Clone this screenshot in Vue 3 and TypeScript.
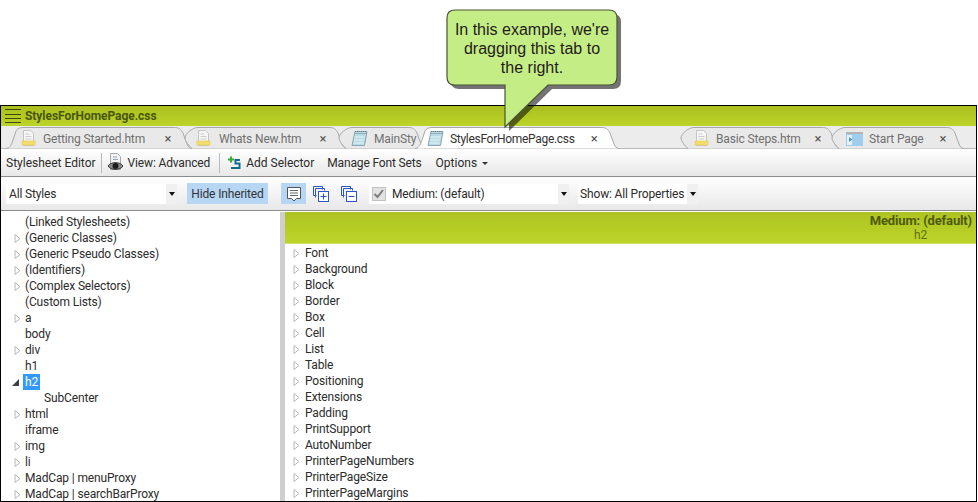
<template>
  <div class="page">
    <div class="callout">
      <svg class="callout-shape" width="190" height="130" viewBox="0 0 190 130">
        <path class="callout-shadow" :d="calloutPath" transform="translate(4 4)" />
        <path class="callout-body" :d="calloutPath" />
      </svg>
      <p class="callout-text">In this example, we're dragging this tab to the right.</p>
    </div>

    <div class="window">
      <div class="title-bar">
        <svg class="grip" width="16" height="16" viewBox="0 0 16 16">
          <path d="M0 1.500h16M0 6.500h16M0 10.500h16M0 14.500h16" stroke="#3f4a0a" fill="none" />
        </svg>
        <span class="title-text">StylesForHomePage.css</span>
      </div>

      <div class="tab-strip">
        <div
          v-for="tab in tabs"
          :key="tab.label"
          class="tab"
          :class="{ active: tab.active }"
          :style="{ width: tab.width + 'px', marginLeft: tab.offset + 'px' }"
        >
          <svg class="tab-shape" :width="tab.width" height="23" :viewBox="`0 0 ${tab.width} 23`">
            <path :d="tabPath(tab.width, tab.first)" />
          </svg>
          <svg
            v-if="tab.icon === 'doc'"
            class="tab-icon"
            :style="{ left: tab.iconX + 'px' }"
            width="15"
            height="17"
            viewBox="0 0 15 17"
          >
            <path d="M2.500.5h7l3 3v12h-10z" fill="#f6f6f4" stroke="#c4c4c4" />
            <path d="M4.500 4h4M4.500 6.500h6M4.500 9h6" stroke="#cdcdcd" />
            <rect x="1" y="11" width="13" height="4" fill="#f4dd6e" stroke="#e3c94e" stroke-width=".6" />
          </svg>
          <svg
            v-else-if="tab.icon === 'note'"
            class="tab-icon"
            :style="{ left: tab.iconX + 'px' }"
            width="17"
            height="17"
            viewBox="0 0 17 17"
          >
            <path d="M4 1.500h12l-2.500 14H1z" fill="#b9dbe6" stroke="#8aa6b4" />
            <path d="M4 1.500h12M4.500 3.500h11" stroke="#6e7f8c" stroke-dasharray="1 1" />
            <path d="M3.500 7h10M3 10h10M2.600 13h10" stroke="#e8f4f8" />
          </svg>
          <svg
            v-else
            class="tab-icon start"
            :style="{ left: tab.iconX + 'px' }"
            width="17"
            height="14"
            viewBox="0 0 17 14"
          >
            <rect x="0" y="0" width="17" height="14" fill="#9fcdee" />
            <rect x="0" y="0" width="17" height="2" fill="#b4b4b4" />
            <rect x="1" y="3" width="5" height="10" fill="#e8f2f8" />
            <path d="M3 5l3.500 2.500L3 10z" fill="#4f94c8" />
          </svg>
          <span class="tab-label" :style="{ left: tab.labelX + 'px' }">{{ tab.label }}</span>
          <span v-if="tab.closeX" class="tab-close" :style="{ left: tab.closeX + 'px' }">×</span>
        </div>
      </div>

      <div class="toolbar">
        <span class="tool-text wide">Stylesheet Editor</span>
        <i class="tool-sep"></i>
        <svg class="eye" width="17" height="19" viewBox="0 0 17 19">
          <path d="M3.500.5h7l3 3v13h-10z" fill="#f2f2f2" stroke="#a9a9a9" />
          <path d="M6 4h4M6 6.500h5" stroke="#8aa6c0" />
          <path d="M1 13c3-4.500 12-4.500 15 0-3 4.500-12 4.500-15 0z" fill="#8c8c8c" stroke="#333" />
          <circle cx="8.500" cy="13" r="3" fill="#1c1c1c" />
        </svg>
        <span class="tool-text">View: Advanced</span>
        <i class="tool-sep second"></i>
        <svg class="add" width="14" height="14" viewBox="0 0 14 14">
          <path d="M4 .5v6M1 3.500h6" stroke="#3ba935" stroke-width="2" />
          <path d="M13 4H8.500V7.500H12.500V12H4" stroke="#12698f" stroke-width="2" fill="none" />
        </svg>
        <span class="tool-text wide">Add Selector</span>
        <span class="tool-text fonts">Manage Font Sets</span>
        <span class="tool-text wide options">Options</span>
        <i class="tiny-caret"></i>
      </div>

      <div class="filter-bar">
        <div class="combo styles">
          <span>All Styles</span>
          <b class="combo-btn"><i class="caret"></i></b>
        </div>
        <button class="hide-btn">Hide Inherited</button>
        <div class="icon-btn selected">
          <svg width="16" height="16" viewBox="0 0 16 16">
            <path d="M1.500 1.500h13v11h-4l-2.500 2.500-2.500-2.500h-4z" fill="#fff" stroke="#555" />
            <path d="M4 4.500h8M4 7h8M4 9.500h8" stroke="#666" />
          </svg>
        </div>
        <div class="icon-btn plus">
          <svg width="16" height="17" viewBox="0 0 16 17">
            <path d="M.5 1.500h9v3M.5 1.500v9h3M2.500 3.500h9v2M2.500 3.500v9" fill="none" stroke="#2c55c8" />
            <rect x="5.500" y="6.500" width="10" height="10" fill="#fff" stroke="#2c55c8" />
            <path d="M10.500 8.500v6M7.500 11.500h6" stroke="#2c55c8" />
          </svg>
        </div>
        <div class="icon-btn minus">
          <svg width="16" height="17" viewBox="0 0 16 17">
            <path d="M.5 1.500h9v3M.5 1.500v9h3M2.500 3.500h9v2M2.500 3.500v9" fill="none" stroke="#2c55c8" />
            <rect x="5.500" y="6.500" width="10" height="10" fill="#fff" stroke="#2c55c8" />
            <path d="M7.500 11.500h6" stroke="#2c55c8" />
          </svg>
        </div>
        <div class="combo medium">
          <i class="check">
            <svg width="14" height="14" viewBox="0 0 14 14">
              <path d="M2.500 7l3 3 5.500-7" fill="none" stroke="#7c7c7c" stroke-width="2" />
            </svg>
          </i>
          <span>Medium: (default)</span>
          <b class="combo-btn"><i class="caret"></i></b>
        </div>
        <div class="combo show">
          <span>Show: All Properties</span>
          <b class="combo-btn"><i class="caret"></i></b>
        </div>
      </div>

      <div class="panes">
        <ul class="tree">
          <li v-for="row in selectors" :key="row.label" class="row" :class="{ nested: row.nested }">
            <svg v-if="row.state === 'closed'" class="arrow" width="6" height="9" viewBox="0 0 6 9">
              <path d="M.5.500l5 4-5 4z" fill="#fff" stroke="#b8b8b8" />
            </svg>
            <svg v-else-if="row.state === 'open'" class="arrow open" width="7" height="7" viewBox="0 0 7 7">
              <path d="M7 0v7H0z" fill="#404040" />
            </svg>
            <i v-else class="arrow"></i>
            <span class="row-label" :class="{ picked: row.picked }">{{ row.label }}</span>
          </li>
        </ul>
        <div class="splitter"></div>
        <div class="props">
          <div class="props-head">
            <strong>Medium: (default)</strong>
            <span>h2</span>
          </div>
          <ul class="prop-list">
            <li v-for="name in properties" :key="name" class="row">
              <svg class="arrow" width="6" height="9" viewBox="0 0 6 9">
                <path d="M.5.500l5 4-5 4z" fill="#fff" stroke="#b8b8b8" />
              </svg>
              <span class="row-label">{{ name }}</span>
            </li>
          </ul>
        </div>
      </div>
    </div>
  </div>
</template>

<script setup lang="ts">
interface Tab {
  label: string
  icon: 'doc' | 'note' | 'start'
  width: number
  offset: number
  iconX: number
  labelX: number
  closeX?: number
  first?: boolean
  active?: boolean
}

interface SelectorRow {
  label: string
  state?: 'closed' | 'open'
  nested?: boolean
  picked?: boolean
}

const calloutPath =
  'M11 1H165Q173 1 173 9V68Q173 76 165 76H104L61 118V76H11Q3 76 3 68V9Q3 1 11 1Z'

const tabs: Tab[] = [
  { label: 'Getting Started.htm', icon: 'doc', width: 187, offset: 4, iconX: 16, labelX: 38, closeX: 158, first: true },
  { label: 'Whats New.htm', icon: 'doc', width: 163, offset: -8, iconX: 12, labelX: 35, closeX: 134 },
  { label: 'MainSty', icon: 'note', width: 88, offset: -9, iconX: 13, labelX: 36 },
  { label: 'StylesForHomePage.css', icon: 'note', width: 205, offset: -12, iconX: 13, labelX: 36, closeX: 175, first: true, active: true },
  { label: 'Basic Steps.htm', icon: 'doc', width: 160, offset: 61, iconX: 14, labelX: 36, closeX: 133 },
  { label: 'Start Page', icon: 'start', width: 133, offset: -9, iconX: 15, labelX: 38, closeX: 107 }
]

const selectors: SelectorRow[] = [
  { label: '(Linked Stylesheets)' },
  { label: '(Generic Classes)', state: 'closed' },
  { label: '(Generic Pseudo Classes)', state: 'closed' },
  { label: '(Identifiers)', state: 'closed' },
  { label: '(Complex Selectors)', state: 'closed' },
  { label: '(Custom Lists)' },
  { label: 'a', state: 'closed' },
  { label: 'body' },
  { label: 'div', state: 'closed' },
  { label: 'h1' },
  { label: 'h2', state: 'open', picked: true },
  { label: 'SubCenter', nested: true },
  { label: 'html', state: 'closed' },
  { label: 'iframe' },
  { label: 'img', state: 'closed' },
  { label: 'li', state: 'closed' },
  { label: 'MadCap | menuProxy', state: 'closed' },
  { label: 'MadCap | searchBarProxy', state: 'closed' }
]

const properties = [
  'Font',
  'Background',
  'Block',
  'Border',
  'Box',
  'Cell',
  'List',
  'Table',
  'Positioning',
  'Extensions',
  'Padding',
  'PrintSupport',
  'AutoNumber',
  'PrinterPageNumbers',
  'PrinterPageSize',
  'PrinterPageMargins'
]

const tabPath = (w: number, first?: boolean) => {
  const left = first
    ? 'M1 22.500C4 22.500 6 20 8 14L11 5C12 3 14 1.500 18 1.500'
    : 'M8 22.500C5 20 1 15 1 12C1 8 8 1.500 14 1.500'
  return `${left}H${w - 18}C${w - 13} 1.500 ${w - 11} 3 ${w - 9} 7L${w - 5} 18C${w - 4} 21 ${w - 2} 22.500 ${w} 22.500`
}
</script>

<style scoped>
.page {
  position: relative;
  width: 978px;
  height: 502px;
  overflow: hidden;
  background: #fff;
  font-family: Roboto, "Noto Sans", sans-serif;
  font-size: 12px;
  letter-spacing: -0.15px;
  color: #2b2b2b;
}

.callout {
  position: absolute;
  left: 444px;
  top: 9px;
  z-index: 5;
  width: 190px;
  height: 130px;
}

.callout-shape {
  position: absolute;
  left: 0;
  top: 0;
}

.callout-body {
  fill: #c4ee85;
  stroke: #4a5238;
  stroke-width: 1.2;
}

.callout-shadow {
  fill: #000;
  opacity: 0.55;
}

.callout-text {
  position: relative;
  margin: 0 0 0 9px;
  padding-top: 11px;
  width: 158px;
  font-family: "Liberation Sans", Arial, sans-serif;
  font-size: 16px;
  line-height: 19px;
  letter-spacing: 0;
  text-align: center;
  color: #241a1a;
}

.window {
  position: absolute;
  left: 0;
  top: 105px;
  width: 977px;
  height: 397px;
  box-sizing: border-box;
  border: 1px solid #000;
  display: flex;
  flex-direction: column;
  overflow: hidden;
}

.title-bar {
  height: 20px;
  flex: none;
  display: flex;
  align-items: center;
  gap: 4px;
  padding-left: 4px;
  background: linear-gradient(#aabf1f, #bcd42a);
  font-weight: 700;
  color: #48560a;
}

.title-text {
  margin-top: -1px;
  letter-spacing: -0.05px;
}

.tab-strip {
  height: 22px;
  flex: none;
  display: flex;
  background: #ececec;
  border-bottom: 1px solid #b9b9b9;
}

.tab {
  position: relative;
  flex: none;
  height: 23px;
  color: #707070;
}

.tab.active {
  z-index: 2;
  color: #333;
  letter-spacing: -0.3px;
}

.tab-shape {
  position: absolute;
  left: 0;
  top: 0;
}

.tab-shape path {
  fill: #e9e9e9;
  stroke: #a8a8a8;
}

.tab.active .tab-shape path {
  fill: #fff;
}

.tab-icon {
  position: absolute;
  top: 4px;
}

.tab-icon.start {
  top: 6px;
}

.tab-label {
  position: absolute;
  top: 4px;
  line-height: 18px;
  white-space: nowrap;
}

.tab-close {
  position: absolute;
  top: 4px;
  width: 10px;
  text-align: center;
  line-height: 18px;
  font-size: 13px;
  color: #555;
}

.toolbar {
  height: 27px;
  flex: none;
  display: flex;
  align-items: center;
  padding-left: 5px;
  background: linear-gradient(#fff, #e8e8e8);
  border-bottom: 1px solid #8c8c8c;
}

.wide {
  letter-spacing: 0;
}

.tool-sep {
  width: 1px;
  height: 20px;
  margin: 0 5px;
  background: #b5bcc0;
}

.tool-sep.second {
  margin: 0 7px 0 9px;
}

.eye {
  margin-right: 4px;
}

.add {
  margin-right: 5px;
}

.fonts {
  margin-left: 13px;
}

.options {
  margin-left: 14px;
}

.tiny-caret {
  margin: 1px 0 0 5px;
  border: 3px solid transparent;
  border-top-color: #333;
  border-bottom: 0;
}

.filter-bar {
  height: 33px;
  flex: none;
  display: flex;
  align-items: center;
  padding-left: 5px;
  background: linear-gradient(#fff, #e8e8e8);
  border-bottom: 1px solid #8c8c8c;
}

.combo {
  height: 20px;
  display: flex;
  align-items: center;
  background: #fff;
  padding-left: 2px;
  box-sizing: border-box;
  flex: none;
}

.combo span {
  flex: 1;
  white-space: nowrap;
}

.combo-btn {
  width: 11px;
  height: 20px;
  flex: none;
  display: flex;
  align-items: center;
  justify-content: center;
  background: #f0f0f0;
}

.caret {
  border: 3.5px solid transparent;
  border-top: 4px solid #111;
  border-bottom: 0;
}

.styles {
  width: 171px;
  padding-left: 3px;
}

.hide-btn {
  width: 81px;
  height: 21px;
  flex: none;
  margin-left: 10px;
  padding: 0;
  border: 0;
  background: #b6d6f4;
  font: inherit;
  letter-spacing: inherit;
  color: #333;
}

.icon-btn {
  flex: none;
  height: 21px;
  display: flex;
  align-items: center;
  justify-content: center;
}

.selected {
  width: 25px;
  margin-left: 13px;
  background: #b6d6f4;
}

.plus {
  width: 16px;
  margin-left: 7px;
}

.minus {
  width: 16px;
  margin-left: 12px;
}

.medium {
  width: 200px;
  margin-left: 12px;
  padding-left: 3px;
}

.check {
  width: 14px;
  height: 14px;
  flex: none;
  margin-right: 6px;
  background: #e2e2e2;
  border: 1px solid #c2c2c2;
  box-sizing: border-box;
  display: flex;
  align-items: center;
  justify-content: center;
}

.check svg {
  margin: -1px;
}

.show {
  margin-left: 9px;
  width: 120px;
}

.panes {
  flex: 1;
  min-height: 0;
  display: flex;
  padding-top: 1px;
}

.tree {
  width: 279px;
  flex: none;
  margin: 0;
  padding: 2px 0 0;
  list-style: none;
}

.splitter {
  width: 5px;
  flex: none;
  background: #cfcfcf;
}

.props {
  flex: 1;
  min-width: 0;
}

.props-head {
  height: 32px;
  display: flex;
  flex-direction: column;
  align-items: flex-end;
  padding: 1px 4px 0 0;
  box-sizing: border-box;
  background: linear-gradient(#aec322, #bdd52a);
  border-bottom: 1px solid #cfe06a;
  line-height: 15px;
  color: #4d5a0c;
}

.props-head strong {
  font-size: 13px;
}

.props-head span {
  margin-right: 45px;
  color: #5f6f12;
}

.prop-list {
  margin: 0;
  padding: 1px 0 0 8px;
  list-style: none;
}

.row {
  height: 16px;
  display: flex;
  align-items: center;
  line-height: 16px;
  white-space: nowrap;
}

.tree .row {
  padding-left: 13px;
}

.arrow {
  width: 7px;
  flex: none;
  margin-right: 4px;
}

.tree .arrow {
  margin-right: 3px;
}

.tree .arrow.open {
  margin-left: -2px;
  margin-right: 5px;
}

.tree .nested {
  padding-left: 32px;
}

.row-label {
  padding: 0 1px;
}

.picked {
  padding: 0 2px;
  margin-left: -1px;
  background: #3399ff;
  color: #fff;
}
</style>
